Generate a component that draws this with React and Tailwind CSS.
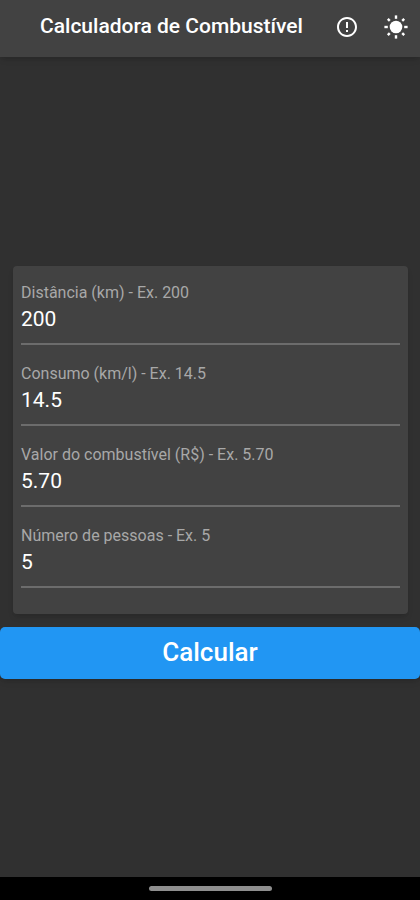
import React, { useState } from "react";
import { MdErrorOutline } from "react-icons/md";

const FIELDS = [
  { name: "distance", label: "Distância (km) - Ex. 200", initial: "200" },
  { name: "consumption", label: "Consumo (km/l) - Ex. 14.5", initial: "14.5" },
  { name: "price", label: "Valor do combustível (R$) - Ex. 5.70", initial: "5.70" },
  { name: "people", label: "Número de pessoas - Ex. 5", initial: "5" },
];

const RAYS = [0, 45, 90, 135, 180, 225, 270, 315];

const SunIcon = () => (
  <svg width="24" height="24" viewBox="0 0 24 24" fill="currentColor">
    <circle cx="12" cy="12" r="6.3" />
    {RAYS.map((angle) => (
      <rect
        key={angle}
        x="10.8"
        y="0.4"
        width="2.4"
        height={angle % 90 === 0 ? 3.4 : 2.8}
        transform={`rotate(${angle} 12 12)`}
      />
    ))}
  </svg>
);

const Field = ({ name, label, value, onChange }) => (
  <div className="h-[62px] border-b-2 border-[#6c6c6c]">
    <label htmlFor={name} className="block text-base leading-5 text-[#a8a8a8]">
      {label}
    </label>
    <input
      id={name}
      type="text"
      inputMode="decimal"
      value={value}
      onChange={(e) => onChange(name, e.target.value)}
      className="block w-full h-8 bg-transparent text-[21px] text-white outline-none"
    />
  </div>
);

const App = () => {
  const [values, setValues] = useState(
    Object.fromEntries(FIELDS.map((f) => [f.name, f.initial]))
  );

  const handleChange = (name, value) => {
    setValues({ ...values, [name]: value });
  };

  return (
    <div className="min-h-screen flex flex-col bg-[#303030] text-white font-['Roboto',sans-serif]">
      <header className="h-[57px] flex items-center pb-[3px] pr-3 bg-[#424242] shadow-md">
        <h1 className="flex-1 pl-10 text-[21px] font-medium whitespace-nowrap">
          Calculadora de Combustível
        </h1>
        <button type="button" aria-label="Informações" className="mr-[25px]">
          <MdErrorOutline size={24} />
        </button>
        <button type="button" aria-label="Alternar tema">
          <SunIcon />
        </button>
      </header>

      <main className="flex-1 flex flex-col justify-center pt-2.5">
        <form onSubmit={(e) => e.preventDefault()}>
          <div className="flex flex-col gap-[19px] ml-[13px] mr-3 mb-[13px] px-2 pt-[17px] pb-[26px] rounded-sm bg-[#424242] shadow-md">
            {FIELDS.map((f) => (
              <Field
                key={f.name}
                name={f.name}
                label={f.label}
                value={values[f.name]}
                onChange={handleChange}
              />
            ))}
          </div>
          <button
            type="submit"
            className="block w-full h-[52px] rounded-[5px] bg-[#2196f3] text-[26px] font-medium shadow-md"
          >
            Calcular
          </button>
        </form>
      </main>

      <footer className="h-[23px] flex items-center justify-center bg-black">
        <div className="w-[123px] h-[5px] rounded-full bg-[#8e8e8e]" />
      </footer>
    </div>
  );
};

export default App;
